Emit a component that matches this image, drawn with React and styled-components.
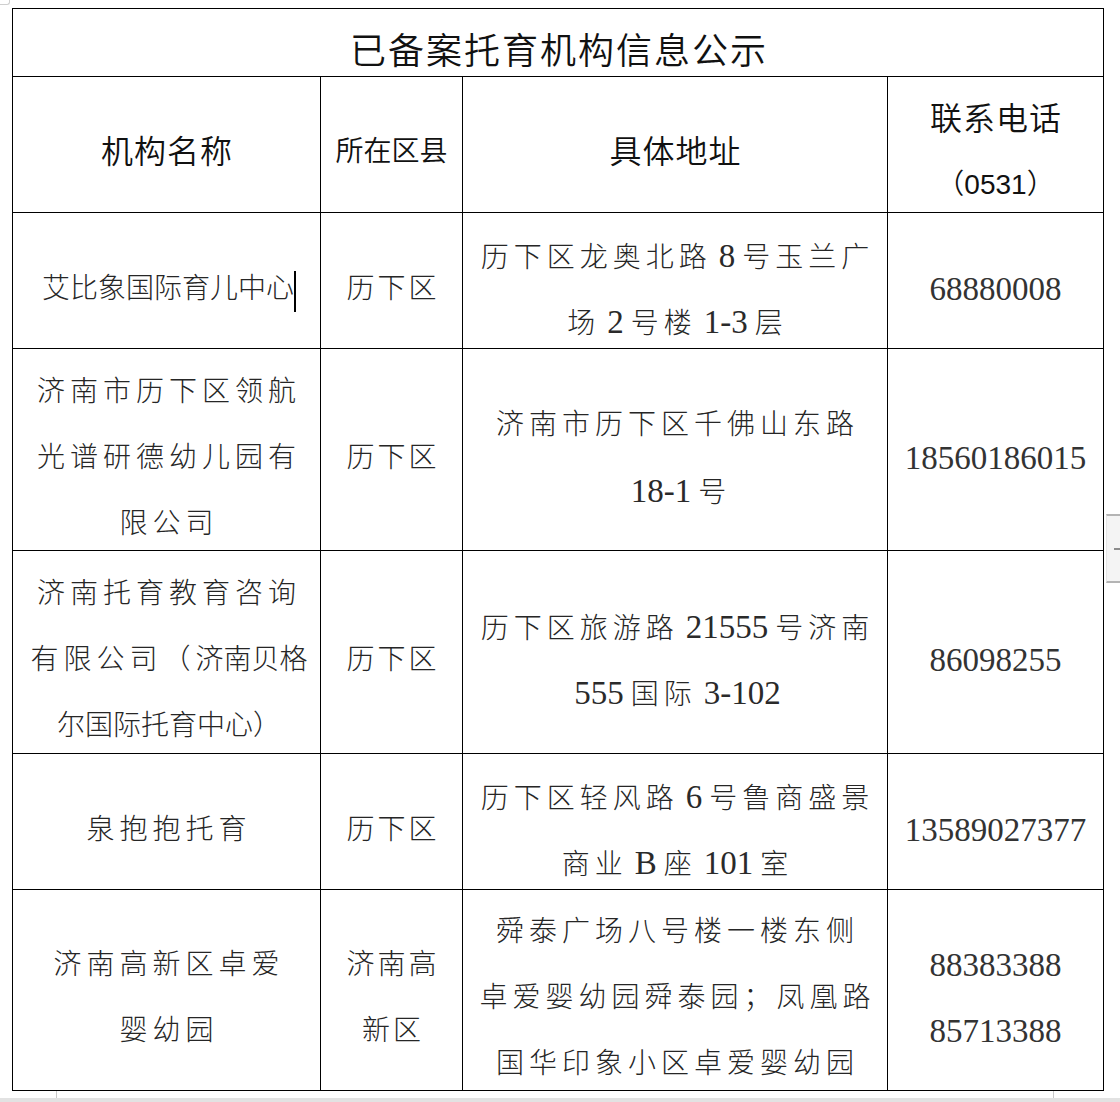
import React from 'react';
import styled, { createGlobalStyle } from 'styled-components';

const GlobalStyle = createGlobalStyle`
  html, body {
    margin: 0;
    padding: 0;
    background: #fff;
  }
  body {
    font-family: "Noto Sans CJK SC", sans-serif;
    text-spacing-trim: space-all;
  }
`;

const Page = styled.div`
  position: relative;
  width: 1120px;
  height: 1102px;
  overflow: hidden;
`;

const Corner = styled.div`
  position: absolute;
  top: 0;
  left: 0;
  width: 9px;
  height: 4px;
  border-right: 1px solid #cfcfcf;
  border-bottom: 1px solid #cfcfcf;
  border-bottom-right-radius: 3px;
`;

const SheetArea = styled.div`
  padding: 8px 0 0 12px;
`;

const Sheet = styled.div`
  display: grid;
  grid-template-columns: 308px 142px 425px 216px;
  grid-template-rows: 68px 136px 136px 202px 203px 136px 201px;
  width: max-content;
  border-left: 1px solid #000;
  border-top: 1px solid #000;
`;

const Cell = styled.div`
  box-sizing: border-box;
  min-height: 0;
  border-right: 1px solid #000;
  border-bottom: 1px solid #000;
  display: flex;
  flex-direction: column;
  justify-content: center;
  align-items: center;
  padding-top: 16px;
  white-space: nowrap;
  color: #1a1a1a;
`;

const TitleCell = styled(Cell)`
  grid-column: 1 / -1;
  padding-top: 11px;
  font-family: "Noto Sans CJK SC", sans-serif;
  font-weight: 350;
  font-size: 36px;
  letter-spacing: 2px;
  padding-left: 2px;
  line-height: 40px;
  color: #111;
`;

const HeadCell = styled(Cell)`
  padding-top: 15px;
  color: #111;
`;

const HeadLine = styled.div`
  font-family: "Liberation Sans", "Noto Sans CJK SC", sans-serif;
  font-weight: 350;
  font-size: ${p => p.$size ?? 32}px;
  letter-spacing: ${p => p.$spacing ?? 1}px;
  padding-left: ${p => p.$spacing ?? 1}px;
  line-height: 66px;
  height: 66px;
`;

const TextLine = styled.div`
  font-family: "Liberation Serif", "Noto Sans CJK SC", serif;
  font-weight: 300;
  font-size: 28px;
  letter-spacing: ${p => p.$spacing ?? 5}px;
  padding-left: ${p => p.$spacing ?? 5}px;
  line-height: 66px;
  height: 66px;
  color: #262626;
`;

const Tight = styled.span`
  letter-spacing: 0;
`;

const Num = styled.span`
  font-size: 33px;
  font-weight: 400;
  letter-spacing: 0;
  margin: 0 7px;
  color: #2a2a2a;
`;

const Caret = styled.span`
  display: inline-block;
  width: 2px;
  height: 41px;
  background: #000;
  vertical-align: middle;
`;

const PhoneLine = styled.div`
  font-family: "Liberation Serif", serif;
  font-size: 33px;
  line-height: 66px;
  height: 66px;
  color: #333;
`;

const Footer = styled.div`
  display: grid;
  grid-template-columns: 56px 1px 996px 1px 1fr;
  height: 7px;
  border-bottom: 4px solid #e2e2e2;
`;

const FooterRule = styled.span`
  background: #c9c9c9;
`;

const SideHandle = styled.div`
  position: absolute;
  left: 1106px;
  top: 514px;
  width: 14px;
  height: 65px;
  display: flex;
  align-items: center;
  justify-content: flex-end;
  background: #f4f4f4;
  border-top: 2px solid #b4b4b4;
  border-bottom: 2px solid #b4b4b4;
  border-left: 1px solid #e6e6e6;

  &::after {
    content: '';
    width: 7px;
    height: 2px;
    background: #8c8c8c;
  }
`;

const ROWS = [
  {
    name: [<><Tight>艾比象国际育儿中心</Tight><Caret /></>],
    district: ['历下区'],
    address: [
      <>历下区龙奥北路<Num>8</Num>号玉兰广</>,
      <>场<Num>2</Num>号楼<Num>1-3</Num>层</>,
    ],
    phone: ['68880008'],
  },
  {
    name: ['济南市历下区领航', '光谱研德幼儿园有', '限公司'],
    district: ['历下区'],
    address: ['济南市历下区千佛山东路', <><Num>18-1</Num>号</>],
    phone: ['18560186015'],
  },
  {
    name: [
      '济南托育教育咨询',
      <>有限公司（<Tight>济南贝格</Tight></>,
      <Tight>尔国际托育中心）</Tight>,
    ],
    district: ['历下区'],
    address: [
      <>历下区旅游路<Num>21555</Num>号济南</>,
      <><Num>555</Num>国际<Num>3-102</Num></>,
    ],
    phone: ['86098255'],
  },
  {
    name: ['泉抱抱托育'],
    district: ['历下区'],
    address: [
      <>历下区轻风路<Num>6</Num>号鲁商盛景</>,
      <>商业<Num>B</Num>座<Num>101</Num>室</>,
    ],
    phone: ['13589027377'],
  },
  {
    name: ['济南高新区卓爱', '婴幼园'],
    district: ['济南高', '新区'],
    address: ['舜泰广场八号楼一楼东侧', '卓爱婴幼园舜泰园；凤凰路', '国华印象小区卓爱婴幼园'],
    phone: ['88383388', '85713388'],
  },
];

const App = () => (
  <Page>
    <GlobalStyle />
    <Corner />
    <SheetArea>
      <Sheet>
        <TitleCell>已备案托育机构信息公示</TitleCell>

        <HeadCell>
          <HeadLine>机构名称</HeadLine>
        </HeadCell>
        <HeadCell>
          <HeadLine $size={28} $spacing={0}>所在区县</HeadLine>
        </HeadCell>
        <HeadCell>
          <HeadLine>具体地址</HeadLine>
        </HeadCell>
        <HeadCell>
          <HeadLine>联系电话</HeadLine>
          <HeadLine $size={28} $spacing={0}>（0531）</HeadLine>
        </HeadCell>

        {ROWS.map((row, i) => (
          <React.Fragment key={i}>
            <Cell>
              {row.name.map((line, j) => (
                <TextLine key={j}>{line}</TextLine>
              ))}
            </Cell>
            <Cell>
              {row.district.map((line, j) => (
                <TextLine key={j} $spacing={3}>{line}</TextLine>
              ))}
            </Cell>
            <Cell>
              {row.address.map((line, j) => (
                <TextLine key={j}>{line}</TextLine>
              ))}
            </Cell>
            <Cell>
              {row.phone.map((line, j) => (
                <PhoneLine key={j}>{line}</PhoneLine>
              ))}
            </Cell>
          </React.Fragment>
        ))}
      </Sheet>
    </SheetArea>
    <Footer>
      <span />
      <FooterRule />
      <span />
      <FooterRule />
    </Footer>
    <SideHandle />
  </Page>
);

export default App;
